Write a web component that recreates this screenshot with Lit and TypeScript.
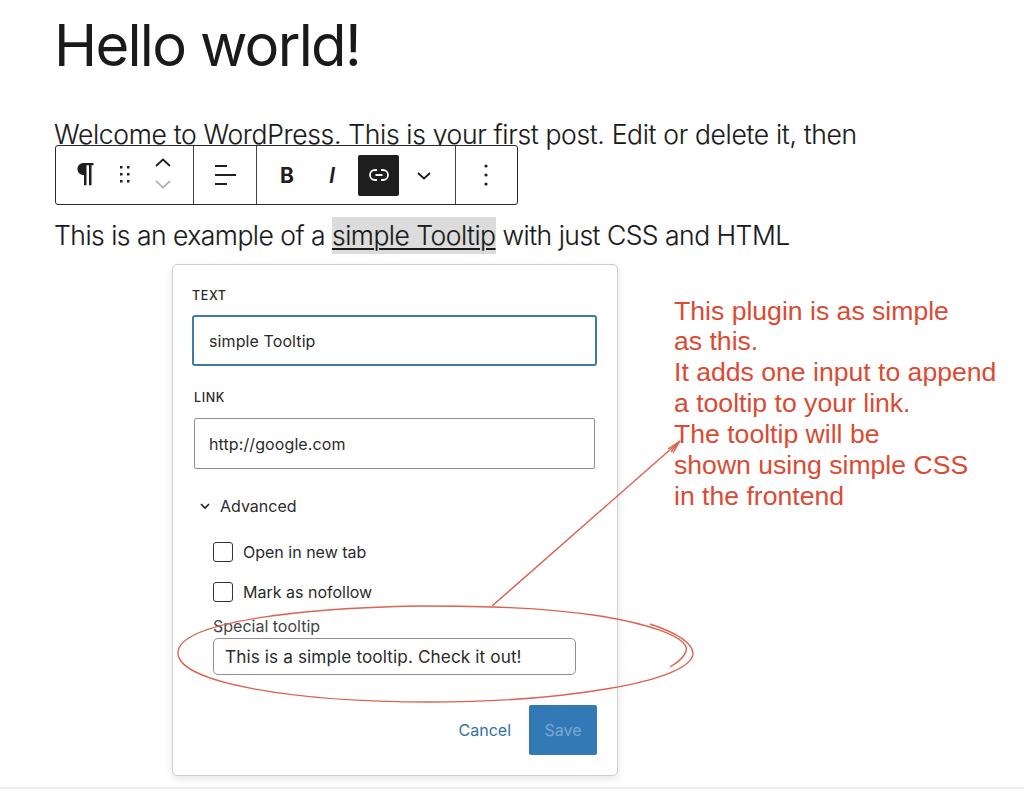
import { LitElement, html, css, svg } from "lit";
import { customElement } from "lit/decorators.js";

const chevron = (d: string, color = "#1e1e1e") => svg`<path d=${d} fill="none" stroke=${color} stroke-width="1.8"/>`;

@customElement("app-root")
export class AppRoot extends LitElement {
  static styles = css`
    :host { display: block; position: relative; width: 1024px; height: 798px; overflow: hidden; background: #fff; color: #1a1a1a; font-family: Inter, "Liberation Sans", sans-serif; }
    .editor { display: flex; flex-direction: column; align-items: flex-start; padding-left: 54px; }
    h1 { margin: 10px 0 0; font-size: 58px; line-height: 70px; font-weight: 400; letter-spacing: -1.7px; height: 87px; }
    .para { margin: 0; font-size: 26.5px; font-weight: 300; line-height: 40px; white-space: nowrap; -webkit-text-stroke: 0.15px #1a1a1a; }
    .p1 { margin-top: 17px; height: 31px; letter-spacing: -0.33px; }
    .p2 { margin-top: 10px; height: 40px; letter-spacing: -0.52px; }
    .sel { background: #dcdcdc; text-decoration: underline; text-decoration-thickness: 2px; text-underline-offset: 3px; display: inline-block; line-height: 37px; }
    .toolbar { display: flex; height: 60px; box-sizing: border-box; border: 1.5px solid #2b2b2b; border-radius: 3px; background: #fff; position: relative; margin-left: 1px; }
    .grp { display: flex; align-items: center; box-sizing: border-box; border-left: 1.5px solid #444; }
    .grp:first-child { border-left: 0; }
    .g1 { width: 137px; } .g2 { width: 63px; } .g3 { width: 199px; } .g4 { width: 62px; }
    .tbicon { display: block; }
    .active { width: 41px; height: 41px; background: #1e1e1e; border-radius: 2px; display: flex; align-items: center; justify-content: center; }
    .g3 { position: relative; }
    .chev { margin-left: 15px; }
    .b { font: 700 21px Inter, sans-serif; color: #1e1e1e; margin-left: 23px; width: 25px; }
    .i { font: italic 600 22px Inter, sans-serif; color: #1e1e1e; margin-left: 24px; width: 29px; }
    .popover { box-sizing: border-box; width: 446px; height: 512px; margin: 9px 0 0 118px; border: 1px solid #cfcfcf; border-radius: 5px; box-shadow: 0 3px 9px rgba(0,0,0,.1); background: #fff; display: flex; flex-direction: column; padding: 24px 20px 0 19px; color: #2b2b2b; font-size: 16px; }
    label.cap { font-size: 12.5px; font-weight: 500; letter-spacing: .6px; line-height: 14px; display: block; }
    .field { box-sizing: border-box; display: flex; align-items: center; padding-left: 15px; background: #fff; letter-spacing: .1px; }
    .f1 { width: 405px; height: 51px; margin-top: 12px; border: 2px solid #3f7ba6; border-radius: 3px; }
    .l2 { margin: 25px 0 0 2px; }
    .f2 { width: 401px; height: 51px; margin: 13px 0 0 2px; border: 1px solid #8f8f8f; border-radius: 2px; padding-left: 14px; }
    .adv { display: flex; align-items: center; margin: 26px 0 0 7px; gap: 9px; height: 22px; }
    .cbrow { display: flex; align-items: center; gap: 10px; margin-left: 21px; height: 20px; }
    .box { width: 20px; height: 20px; box-sizing: border-box; border: 1.5px solid #333; border-radius: 3px; }
    .c1 { margin-top: 25px; } .c2 { margin-top: 20px; }
    .sp { margin: 15px 0 0 21px; font-size: 16px; line-height: 18px; color: #444; }
    .f3 { width: 363px; height: 37px; margin: 3px 0 0 21px; border: 1px solid #8f8f8f; border-radius: 5px; padding-left: 11px; font-size: 17.2px; }
    .actions { display: flex; justify-content: flex-end; align-items: center; gap: 18px; margin-top: 30px; width: 405px; }
    .cancel { color: #2f74a8; }
    .save { width: 68px; height: 50px; background: #3379b5; color: #7ba9d0; display: flex; align-items: center; justify-content: center; border-radius: 2px; }
    .rule { position: absolute; left: 0; right: 0; top: 787px; height: 2px; background: #ececec; }
    .note { position: absolute; left: 674px; top: 295.500px; font: 26.6px/30.9px "Liberation Sans", Arial, sans-serif; color: #dc4a33; white-space: nowrap; }
    .ink { position: absolute; left: 0; top: 0; pointer-events: none; }
  `;

  render() {
    return html`
      <div class="editor">
        <h1>Hello world!</h1>
        <p class="para p1">Welcome to WordPress. This is your first post. Edit or delete it, then</p>
        <div class="toolbar">
          <div class="grp g1">
            <svg class="tbicon" width="136" height="58" viewBox="0 0 136 58">
              <path d="M24 17h13.500v2.200h-2v20h-2.500v-20h-2.500v20H28V29c-4.200 0-6.500-2.600-6.500-6s2.500-6 6.500-6z" fill="#1e1e1e"/>
              <g fill="#1e1e1e"><rect x="64" y="20" width="2.500" height="2.500"/><rect x="71" y="20" width="2.500" height="2.500"/><rect x="64" y="27" width="2.500" height="2.500"/><rect x="71" y="27" width="2.500" height="2.500"/><rect x="64" y="34" width="2.500" height="2.500"/><rect x="71" y="34" width="2.500" height="2.500"/></g>
              ${chevron("M100 20l7-6.500 7 6.500")}
              ${chevron("M100 35l7 6.500 7-6.500", "#b5b5b5")}
            </svg>
          </div>
          <div class="grp g2">
            <svg class="tbicon" width="61" height="58" viewBox="0 0 61 58">
              <path d="M21 20h12M21 29h21M21 38h12" stroke="#1e1e1e" stroke-width="1.800" fill="none"/>
            </svg>
          </div>
          <div class="grp g3">
            <span class="b">B</span><span class="i">I</span>
            <div class="active">
              <svg width="24" height="24" viewBox="0 0 24 24"><path d="M10 7H8a5 5 0 0 0 0 10h2M14 7h2a5 5 0 0 1 0 10h-2M8.500 12h7" fill="none" stroke="#fff" stroke-width="1.800"/></svg>
            </div>
            <svg class="tbicon chev" width="20" height="20" viewBox="0 0 20 20">${chevron("M4 8l6 5.500 6-5.500")}</svg>
          </div>
          <div class="grp g4">
            <svg class="tbicon" width="60" height="58" viewBox="0 0 60 58"><g fill="#1e1e1e"><circle cx="30" cy="20" r="1.600"/><circle cx="30" cy="29" r="1.600"/><circle cx="30" cy="38" r="1.600"/></g></svg>
          </div>
        </div>
        <p class="para p2">This is an example of a <span class="sel">simple Tooltip</span> with just CSS and HTML</p>
        <div class="popover">
          <label class="cap">TEXT</label>
          <div class="field f1">simple Tooltip</div>
          <label class="cap l2">LINK</label>
          <div class="field f2">http://google.com</div>
          <div class="adv">
            <svg width="12" height="12" viewBox="0 0 12 12"><path d="M2 4l4 4 4-4" fill="none" stroke="#1e1e1e" stroke-width="1.600"/></svg>
            <span>Advanced</span>
          </div>
          <div class="cbrow c1"><span class="box"></span><span>Open in new tab</span></div>
          <div class="cbrow c2"><span class="box"></span><span>Mark as nofollow</span></div>
          <div class="sp">Special tooltip</div>
          <div class="field f3">This is a simple tooltip. Check it out!</div>
          <div class="actions"><span class="cancel">Cancel</span><span class="save">Save</span></div>
        </div>
      </div>
      <div class="rule"></div>
      <div class="note">This plugin is as simple<br />as this.<br />It adds one input to append<br />a tooltip to your link.<br />The tooltip will be<br />shown using simple CSS<br />in the frontend</div>
      <svg class="ink" width="1024" height="798" viewBox="0 0 1024 798">
        <g fill="none" stroke="#dc6350" stroke-width="1.400">
          <path d="M670 667C682 660 688 652 686 647C682 636 650 624 600 616C540 607 480 606 420 606C300 608 178 622 178 653C178 682 290 702 430 702C560 702 690 682 693 654C693 644 680 634 650 624"/>
          <path d="M492 606L680 441"/>
          <path d="M668 449L680 441L673 453M671 452L678 443" />
        </g>
      </svg>
    `;
  }
}
